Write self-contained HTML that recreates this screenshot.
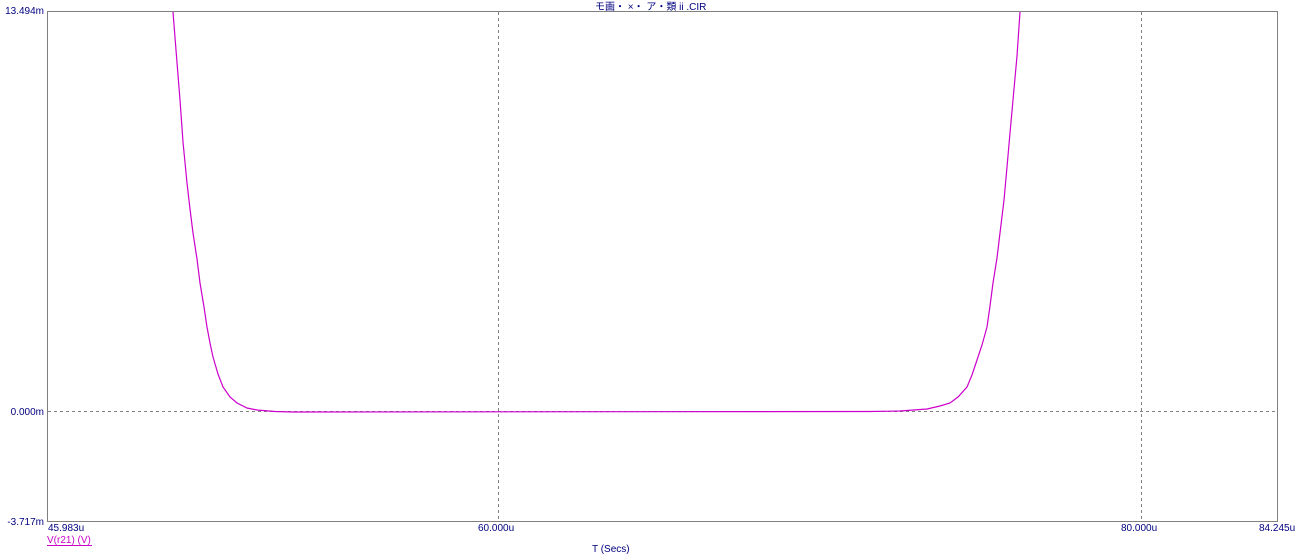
<!DOCTYPE html>
<html><head><meta charset="utf-8"><style>
html,body{margin:0;padding:0;background:#fff;width:1300px;height:560px;overflow:hidden}
svg text{font-family:"Liberation Sans","Noto Sans CJK JP",sans-serif;font-size:10px;fill:#000080}
</style></head><body>
<svg width="1300" height="560" viewBox="0 0 1300 560" xmlns="http://www.w3.org/2000/svg">
<rect x="47.5" y="11.5" width="1230" height="510" fill="none" stroke="#808080" stroke-width="1"/>
<line x1="498.5" y1="12" x2="498.5" y2="521" stroke="#808080" stroke-dasharray="3,3"/>
<line x1="1141.5" y1="12" x2="1141.5" y2="521" stroke="#808080" stroke-dasharray="3,3"/>
<line x1="48" y1="411.5" x2="1277" y2="411.5" stroke="#808080" stroke-dasharray="3,3"/>
<polyline fill="none" stroke="#cc00cc" stroke-width="1.2" points="173,12 176,50 180,100 183,142 187,183 190,209 193,233 197,259 200,283 204,307 207,327 210,343 213,357 218,374 223,387 230,397 237,403 247,408 257,410 275,411.5 293,412 870,411.5 900,411 927,409 940,406 950,403 958,397 967,387 972,375 977,360 982,345 987,327 990,306 993,283 997,258 1000,233 1004,200 1007,167 1010,133 1013,100 1017,56 1020,12"/>
<text x="595" y="10">モ画・ ×・  ア・類 ii .CIR</text>
<text x="44" y="14" text-anchor="end">13.494m</text>
<text x="44" y="415" text-anchor="end">0.000m</text>
<text x="44" y="525" text-anchor="end">-3.717m</text>
<text x="48" y="531">45.983u</text>
<text x="478" y="531">60.000u</text>
<text x="1121" y="531">80.000u</text>
<text x="1259" y="531">84.245u</text>
<text x="47" y="543" style="fill:#cc00cc">V(r21) (V)</text>
<line x1="47" y1="545.5" x2="92" y2="545.5" stroke="#cc00cc"/>
<text x="592" y="552">T (Secs)</text>
</svg>
</body></html>
